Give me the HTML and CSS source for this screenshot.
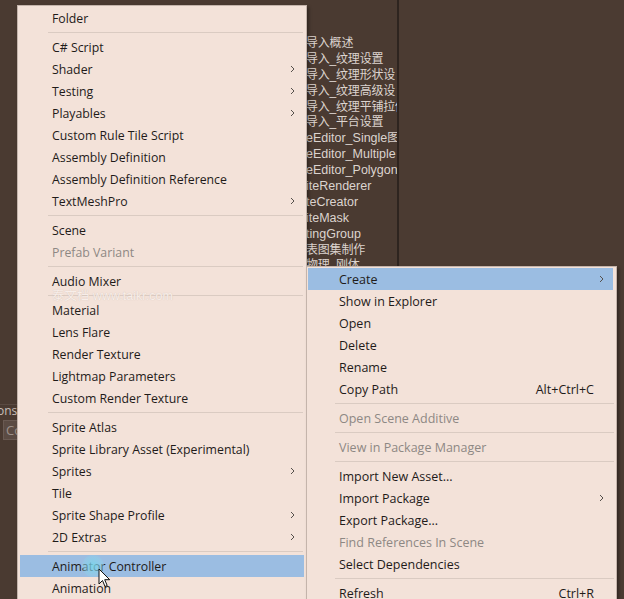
FILE: index.html
```html
<!DOCTYPE html>
<html>
<head>
<meta charset="utf-8">
<link rel="stylesheet" href="styles.css">
</head>
<body>
<div class="editor">
  <div class="strip">
    <div class="strip-top"></div>
    <div class="console-tab">onsc</div>
    <div class="console-btn">Co</div>
    <div class="strip-bottom"></div>
  </div>
  <div class="gap"></div>
  <div class="list">
    <div class="line cn">导入概述</div>
    <div class="line cn">导入_纹理设置</div>
    <div class="line cn">导入_纹理形状设</div>
    <div class="line cn">导入_纹理高级设</div>
    <div class="line cn">导入_纹理平铺拉伸</div>
    <div class="line cn">导入_平台设置</div>
    <div class="line">eEditor_Single图</div>
    <div class="line">eEditor_Multiple</div>
    <div class="line">eEditor_Polygon</div>
    <div class="line">iteRenderer</div>
    <div class="line">teCreator</div>
    <div class="line">iteMask</div>
    <div class="line">tingGroup</div>
    <div class="line cn">表图集制作</div>
    <div class="line cn">物理_刚体</div>
  </div>
  <div class="divider"></div>
  <div class="rest"></div>
</div>

<div class="menu menu-left">
  <div class="item">Folder</div>
  <div class="sep"></div>
  <div class="item">C# Script</div>
  <div class="item">Shader<svg class="chev" viewBox="0 0 5 8"><path d="M1 1l3 3-3 3"/></svg></div>
  <div class="item">Testing<svg class="chev" viewBox="0 0 5 8"><path d="M1 1l3 3-3 3"/></svg></div>
  <div class="item">Playables<svg class="chev" viewBox="0 0 5 8"><path d="M1 1l3 3-3 3"/></svg></div>
  <div class="item">Custom Rule Tile Script</div>
  <div class="item">Assembly Definition</div>
  <div class="item">Assembly Definition Reference</div>
  <div class="item">TextMeshPro<svg class="chev" viewBox="0 0 5 8"><path d="M1 1l3 3-3 3"/></svg></div>
  <div class="sep"></div>
  <div class="item">Scene</div>
  <div class="item disabled">Prefab Variant</div>
  <div class="sep"></div>
  <div class="item">Audio Mixer</div>
  <div class="sep"></div>
  <div class="item">Material</div>
  <div class="item">Lens Flare</div>
  <div class="item">Render Texture</div>
  <div class="item">Lightmap Parameters</div>
  <div class="item">Custom Render Texture</div>
  <div class="sep"></div>
  <div class="item">Sprite Atlas</div>
  <div class="item">Sprite Library Asset (Experimental)</div>
  <div class="item">Sprites<svg class="chev" viewBox="0 0 5 8"><path d="M1 1l3 3-3 3"/></svg></div>
  <div class="item">Tile</div>
  <div class="item">Sprite Shape Profile<svg class="chev" viewBox="0 0 5 8"><path d="M1 1l3 3-3 3"/></svg></div>
  <div class="item">2D Extras<svg class="chev" viewBox="0 0 5 8"><path d="M1 1l3 3-3 3"/></svg></div>
  <div class="sep"></div>
  <div class="item active">Animator Controller</div>
  <div class="item">Animation</div>
  <div class="watermark">泰文档 www.taikr.com</div>
</div>

<div class="menu menu-right">
  <div class="item active">Create<svg class="chev" viewBox="0 0 5 8"><path d="M1 1l3 3-3 3"/></svg></div>
  <div class="item">Show in Explorer</div>
  <div class="item">Open</div>
  <div class="item">Delete</div>
  <div class="item">Rename</div>
  <div class="item">Copy Path<span class="key">Alt+Ctrl+C</span></div>
  <div class="sep"></div>
  <div class="item disabled">Open Scene Additive</div>
  <div class="sep"></div>
  <div class="item disabled">View in Package Manager</div>
  <div class="sep"></div>
  <div class="item">Import New Asset...</div>
  <div class="item">Import Package<svg class="chev" viewBox="0 0 5 8"><path d="M1 1l3 3-3 3"/></svg></div>
  <div class="item">Export Package...</div>
  <div class="item disabled">Find References In Scene</div>
  <div class="item">Select Dependencies</div>
  <div class="sep"></div>
  <div class="item">Refresh<span class="key">Ctrl+R</span></div>
</div>

<div class="cursor">
  <div class="click-glow"></div>
  <svg class="arrow" viewBox="0 0 13 20"><path d="M1 1v15l3.5-3.5 2.5 6 2.2-1-2.5-5.8h5z"/></svg>
</div>
</body>
</html>
```

FILE: styles.css
```css
* { box-sizing: border-box; }
html, body {
  margin: 0;
  padding: 0;
  width: 624px;
  height: 599px;
  overflow: hidden;
  background: #4a3a31;
  font-family: "Open Sans", "Noto Sans", "Noto Sans CJK SC", sans-serif;
}
.editor {
  display: flex;
  width: 624px;
  height: 599px;
}
.strip {
  width: 17px;
  display: flex;
  flex-direction: column;
  overflow: hidden;
}
.strip-top { height: 404px; }
.console-tab {
  height: 14px;
  border-top: 1px solid #5a4a42;
  color: #c8beb8;
  font-size: 12px;
  line-height: 12px;
  margin-left: -3px;
  white-space: nowrap;
}
.console-btn {
  margin: 2px 0 0 3px;
  height: 20px;
  width: 20px;
  background: #5b4b43;
  border: 1px solid #6a5a52;
  color: #9d918a;
  font-size: 13px;
  line-height: 18px;
  padding-left: 2px;
  white-space: nowrap;
}
.strip-bottom { flex: 1; }
.gap { width: 289px; }
.list {
  width: 91px;
  padding-top: 35px;
  overflow: hidden;
  display: flex;
  flex-direction: column;
}
.line {
  height: 15.9px;
  line-height: 16px;
  font-size: 12.5px;
  color: #dcd4cf;
  white-space: nowrap;
  font-family: "Liberation Sans", "Noto Sans CJK SC", sans-serif;
}
.line.cn {
  font-size: 12px;
  letter-spacing: -0.2px;
}
.divider {
  width: 2px;
  background: #2e241f;
}
.rest { flex: 1; background: #4b3b32; }

.menu {
  position: absolute;
  background: #f3e2d9;
  border: 1px solid #c4b4ab;
  box-shadow: 2px 2px 3px rgba(0,0,0,0.35);
  padding-top: 1px;
  color: #1f1b19;
  font-size: 12.3px;
}
.menu-left {
  left: 17px;
  top: 5px;
  width: 290px;
  height: 620px;
}
.menu-right {
  left: 306px;
  top: 266px;
  width: 311px;
  height: 360px;
  font-size: 12.5px;
}
.item {
  height: 22px;
  display: flex;
  align-items: center;
  justify-content: space-between;
  white-space: nowrap;
  position: relative;
}
.menu-left .item { padding: 0 9px 0 32px; margin: 0 2px; }
.menu-left .item.active { background: #9bbde2; }
.menu-right .item { padding: 0 19px 0 31px; margin: 0 3px 0 1px; }
.menu-right .item.active { background: #9bbde2; padding-right: 9px; }
.menu-right .item .chev { margin-right: -10px; }
.menu-right .item.active .chev { margin-right: 0; }
.item.disabled { color: #8e8884; }
.chev {
  width: 5px;
  height: 8px;
  fill: none;
  stroke: #55504c;
  stroke-width: 1;
}
.key { color: #1f1b19; }
.sep {
  height: 7px;
  display: flex;
  align-items: center;
}
.sep::after {
  content: "";
  display: block;
  height: 1px;
  flex: 1;
  background: #dacbc2;
}
.menu-left .sep { padding: 0 3px 0 30px; }
.menu-right .sep { padding: 0 2px 0 28px; }

.watermark {
  position: absolute;
  left: 34px;
  top: 279px;
  font-size: 12.5px;
  color: #f8eee9;
  text-shadow: 0 0 1px #cdbcb2;
  font-family: "Liberation Sans", "Noto Sans CJK SC", sans-serif;
  white-space: nowrap;
}

.cursor {
  position: absolute;
  left: 82px;
  top: 552px;
  width: 30px;
  height: 40px;
}
.click-glow {
  position: absolute;
  left: 0;
  top: 3px;
  width: 22px;
  height: 22px;
  border-radius: 50%;
  background: radial-gradient(circle, rgba(120,215,235,0.85) 0%, rgba(140,210,235,0.5) 55%, rgba(150,200,230,0) 100%);
}
.arrow {
  position: absolute;
  left: 16px;
  top: 16px;
  width: 13px;
  height: 20px;
  fill: #ffffff;
  stroke: #111111;
  stroke-width: 1;
}
```
